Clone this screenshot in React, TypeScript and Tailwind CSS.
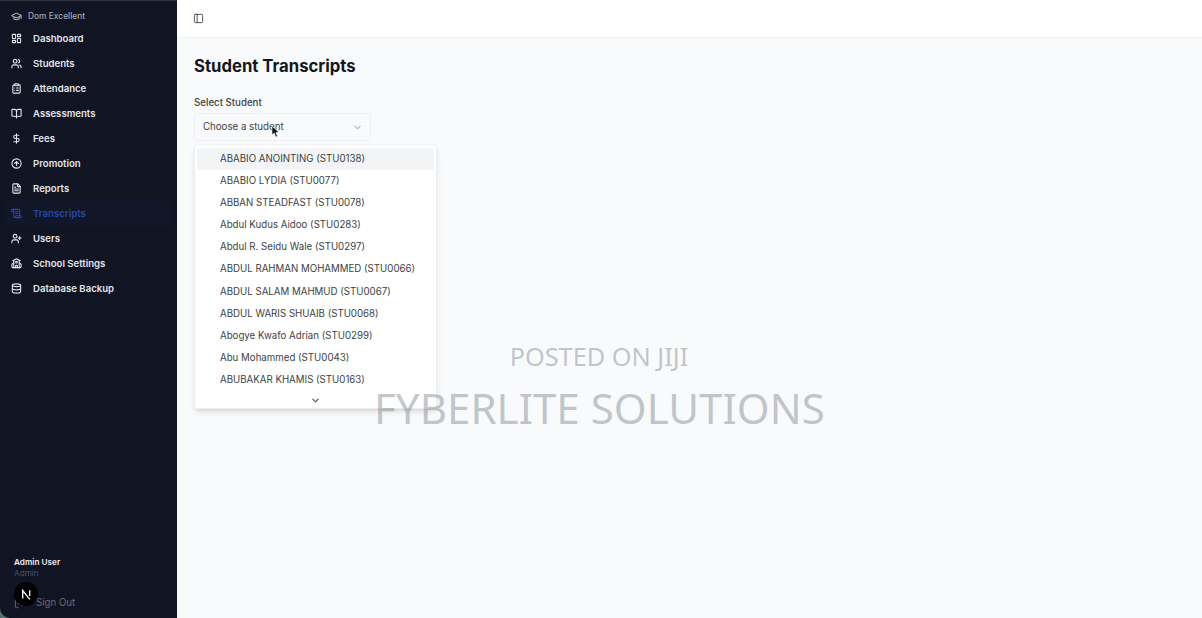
import { BookOpen, ChevronDown, CircleArrowUp, ClipboardList, Database, DollarSign, FileText, GraduationCap, LayoutDashboard, LogOut, PanelLeft, School, ScrollText, UserPlus, Users } from "lucide-react";

const nav = [
  { label: "Dashboard", icon: LayoutDashboard },
  { label: "Students", icon: Users },
  { label: "Attendance", icon: ClipboardList },
  { label: "Assessments", icon: BookOpen },
  { label: "Fees", icon: DollarSign },
  { label: "Promotion", icon: CircleArrowUp },
  { label: "Reports", icon: FileText },
  { label: "Transcripts", icon: ScrollText, active: true },
  { label: "Users", icon: UserPlus },
  { label: "School Settings", icon: School },
  { label: "Database Backup", icon: Database },
];

const students = [
  "ABABIO ANOINTING (STU0138)",
  "ABABIO LYDIA (STU0077)",
  "ABBAN STEADFAST (STU0078)",
  "Abdul Kudus Aidoo (STU0283)",
  "Abdul R. Seidu Wale (STU0297)",
  "ABDUL RAHMAN MOHAMMED (STU0066)",
  "ABDUL SALAM MAHMUD (STU0067)",
  "ABDUL WARIS SHUAIB (STU0068)",
  "Abogye Kwafo Adrian (STU0299)",
  "Abu Mohammed (STU0043)",
  "ABUBAKAR KHAMIS (STU0163)",
];

function Sidebar() {
  return (
    <aside className="relative flex w-[177px] shrink-0 flex-col overflow-hidden rounded-bl-[10px] border-t border-[#30343f] bg-[#111422] text-[#e3e5ea]">
      <div className="flex h-[25px] items-center gap-[6px] pt-[5px] pl-[11px] text-[8.4px] font-medium text-[#a4a7b0]">
        <GraduationCap size={11} strokeWidth={2.4} />
        <span>Dom Excellent</span>
      </div>
      <nav className="flex flex-col pl-1">
        {nav.map(({ label, icon: Icon, active }) => (
          <a
            key={label}
            className={`mr-[6px] flex h-[25px] items-center gap-[11px] rounded pl-[7px] text-[9.6px] font-semibold ${active ? "bg-[#121629] text-[#2845ad]" : ""}`}
          >
            <Icon size={11} strokeWidth={2.4} />
            <span className="pt-px">{label}</span>
          </a>
        ))}
      </nav>
      <div className="mt-auto h-[62px] pl-[14px]">
        <p className="text-[8.2px] leading-[12px] font-semibold text-[#eceef2]">Admin User</p>
        <p className="text-[8.2px] leading-[10px] text-[#4d515e]">Admin</p>
        <div className="mt-[18px] flex items-center gap-[11px] text-[9.7px] leading-[14px] text-[#686c78]">
          <LogOut size={11} />
          <span>Sign Out</span>
        </div>
      </div>
      <div className="absolute bottom-[12px] left-[14px] flex size-6 items-center justify-center rounded-full bg-[#020204]">
        <svg width="11" height="11" viewBox="0 0 11 11" fill="none" stroke="#f1f1f1" strokeWidth="1.4">
          <path d="M1.7 9.5V1.5L8.8 10.4M8.7 1.2V7" />
        </svg>
      </div>
    </aside>
  );
}

function StudentMenu() {
  return (
    <div className="absolute top-[144px] left-[194px] h-[265px] w-[243px] rounded-[3px] border border-[#eceeef] bg-white px-[2px] pt-[3px] shadow-md">
      {students.map((name, i) => (
        <div
          key={name}
          className={`flex h-[22.1px] items-center rounded-[2px] pt-[0.4px] pl-[23px] text-[9.7px] whitespace-nowrap text-[#3d3f44] ${i === 0 ? "bg-[#f2f4f5]" : ""}`}
        >
          {name}
        </div>
      ))}
      <div className="flex h-[18px] items-center justify-center text-[#55575c]">
        <ChevronDown size={11} strokeWidth={2.5} />
      </div>
    </div>
  );
}

export default function App() {
  return (
    <div className="relative flex h-[618px] w-[1202px] overflow-hidden bg-[#53736f] font-['Inter',sans-serif]">
      <Sidebar />
      <main className="flex flex-1 flex-col bg-[#f8fafc]">
        <header className="flex h-[38px] items-center border-b border-[#eef0f2] bg-white pl-4 text-[#45474c]">
          <PanelLeft size={11} />
        </header>
        <section className="pl-[17px]">
          <h1 className="mt-4 text-[16.7px] leading-6 font-bold text-[#15171b]">Student Transcripts</h1>
          <p className="mt-[17px] text-[9.7px] leading-[15px] font-medium text-[#3d3f44]">Select Student</p>
          <button className="mt-[3px] flex h-[28px] w-[177px] items-center justify-between rounded border border-[#eef0f2] pr-[7px] pl-2 text-[9.7px] text-[#3d3f44]">
            <span className="pt-px">Choose a student</span>
            <ChevronDown size={11} className="text-[#85878b]" />
          </button>
        </section>
      </main>
      <StudentMenu />
      <svg className="absolute top-[125px] left-[271px]" width="9" height="13" viewBox="0 0 9 13">
        <path d="M1 1V10L3.2 8L4.8 12L6.5 11.3L4.9 7.5H8Z" fill="#111" stroke="#fff" strokeWidth=".6" />
      </svg>
      <div className="pointer-events-none absolute top-[339px] left-[374px] w-[450px] text-center font-['Noto_Sans',sans-serif] whitespace-nowrap text-[#8b9094]/50">
        <p className="text-[25.3px] leading-[34px]">POSTED ON JIJI</p>
        <p className="mt-[5px] text-[42.1px] leading-[60px]">FYBERLITE SOLUTIONS</p>
      </div>
    </div>
  );
}
